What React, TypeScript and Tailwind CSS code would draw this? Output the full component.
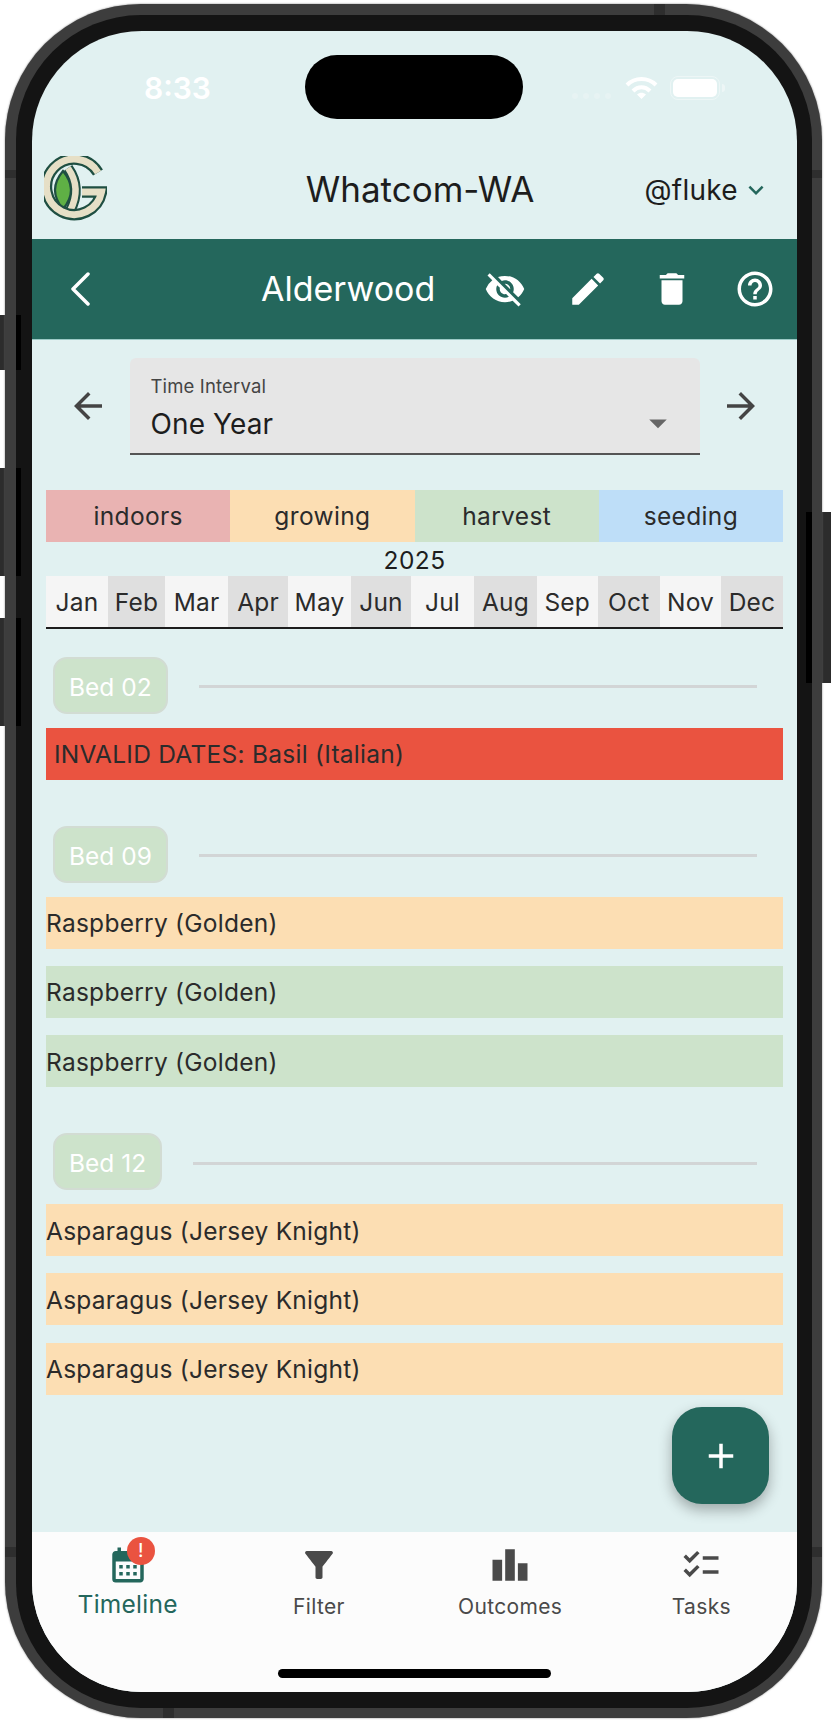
import {
  MdAdd,
  MdArrowBack,
  MdArrowDropDown,
  MdArrowForward,
  MdCalendarMonth,
  MdChecklist,
  MdDelete,
  MdEdit,
  MdFilterAlt,
  MdHelpOutline,
  MdKeyboardArrowDown,
  MdLeaderboard,
  MdVisibilityOff,
} from 'react-icons/md';

const months = ['Jan', 'Feb', 'Mar', 'Apr', 'May', 'Jun', 'Jul', 'Aug', 'Sep', 'Oct', 'Nov', 'Dec'];

const legend = [
  { label: 'indoors', bg: 'bg-[#e9b3b2]' },
  { label: 'growing', bg: 'bg-[#fcdeb3]' },
  { label: 'harvest', bg: 'bg-[#cde3cb]' },
  { label: 'seeding', bg: 'bg-[#bedef8]' },
];

const beds = [
  {
    name: 'Bed 02',
    rows: [{ label: 'INVALID DATES: Basil (Italian)', bg: 'bg-[#ea5340] pl-[8px]' }],
  },
  {
    name: 'Bed 09',
    rows: [
      { label: 'Raspberry (Golden)', bg: 'bg-[#fcdeb3]' },
      { label: 'Raspberry (Golden)', bg: 'bg-[#cde3cb]' },
      { label: 'Raspberry (Golden)', bg: 'bg-[#cde3cb]' },
    ],
  },
  {
    name: 'Bed 12',
    rows: [
      { label: 'Asparagus (Jersey Knight)', bg: 'bg-[#fcdeb3]' },
      { label: 'Asparagus (Jersey Knight)', bg: 'bg-[#fcdeb3]' },
      { label: 'Asparagus (Jersey Knight)', bg: 'bg-[#fcdeb3]' },
    ],
  },
];

function Logo() {
  return (
    <svg width="63" height="68" viewBox="14 15 63 68" fill="none">
      <path d="M33 30 Q17 49 33 68 Q49 49 33 30Z" fill="#5fb045" stroke="#1f4f42" strokeWidth="2.2" />
      <path d="M38 27 Q52 47 40 70" stroke="#1f4f42" strokeWidth="10.5" />
      <path d="M38 27 Q52 47 40 70" stroke="#e6dfc6" strokeWidth="6.5" />
      <path d="M68 31.5 A27.75 27.75 0 1 0 71.5 51 L52 51" stroke="#1f4f42" strokeWidth="11.5" strokeMiterlimit="10" />
      <path d="M68 31.5 A27.75 27.75 0 1 0 71.5 51 L52 51" stroke="#e6dfc6" strokeWidth="7" strokeMiterlimit="10" />
    </svg>
  );
}

function Wifi() {
  return (
    <svg width="33" height="24" viewBox="0 0 33 24" fill="none" stroke="white" strokeWidth="4">
      <path d="M2 9 C10 1 23 1 31 9" />
      <path d="M8 15 C13 10 20 10 25 15" />
      <path d="M16.5 23 L12 18.5 C15 16 18 16 21 18.5Z" fill="white" stroke="none" />
    </svg>
  );
}

function NavItem({ icon, label }: { icon: React.ReactNode; label: string }) {
  return (
    <div className="flex flex-col items-center pt-[12px] text-[#4a4a4a]">
      {icon}
      <span className="mt-[7px] text-[21px] leading-[28px] tracking-[0.35px]">{label}</span>
    </div>
  );
}

export default function App() {
  return (
    <div className="relative w-[839px] h-[1724px] bg-white pl-[5px] pt-[4px] font-[Inter,sans-serif]">
      {/* side buttons */}
      <div className="absolute left-0 top-[315px] w-[5px] h-[55px] bg-[#2c2c2c]" />
      <div className="absolute left-0 top-[468px] w-[5px] h-[108px] bg-[#2c2c2c]" />
      <div className="absolute left-0 top-[618px] w-[5px] h-[108px] bg-[#2c2c2c]" />
      <div className="absolute left-[822px] top-[512px] w-[9px] h-[171px] bg-[#2c2c2c]" />

      <div className="relative w-[817px] h-[1714px] rounded-[136px] bg-[#3d3d3d] pl-[11px] pr-[10px] pt-[11px] pb-[10px] shadow-[0_0_2px_#777]">
        {/* antenna bands */}
        <div className="absolute left-[649px] top-0 w-[11px] h-[11px] bg-[#2e2e2e]" />
        <div className="absolute left-[158px] bottom-0 w-[11px] h-[10px] bg-[#2e2e2e]" />
        <div className="absolute left-0 top-[166px] w-[11px] h-[8px] bg-[#2e2e2e]" />
        <div className="absolute right-0 top-[166px] w-[10px] h-[8px] bg-[#2e2e2e]" />
        <div className="absolute left-0 top-[1543px] w-[11px] h-[10px] bg-[#2e2e2e]" />
        <div className="absolute right-0 top-[1543px] w-[10px] h-[10px] bg-[#2e2e2e]" />

        <div className="relative w-full h-full rounded-[125px] bg-[#141414] p-[16px]">
          {/* darker strips behind the buttons */}
          <div className="absolute left-0 top-[300px] w-[5px] h-[55px] bg-black" />
          <div className="absolute left-0 top-[453px] w-[5px] h-[108px] bg-black" />
          <div className="absolute left-0 top-[603px] w-[5px] h-[108px] bg-black" />
          <div className="absolute right-0 top-[497px] w-[6px] h-[171px] bg-black" />

          <div className="relative flex flex-col w-[765px] h-[1661px] rounded-[110px] overflow-hidden bg-[#e1f1f1] text-[#1d1d1d]">
            {/* notch */}
            <div className="absolute left-[273px] top-[24px] w-[218px] h-[64px] rounded-full bg-black" />

            {/* status bar */}
            <div className="flex items-center justify-between h-[109px] pt-[5px] pl-[112px] pr-[72px] text-white">
              <span className="text-[30px] font-semibold leading-none">8:33</span>
              <div className="flex items-center">
                <div className="flex gap-[5px] mt-[16px] mr-[14px] opacity-20">
                  <span className="w-[6px] h-[6px] rounded-full bg-white" />
                  <span className="w-[6px] h-[6px] rounded-full bg-white" />
                  <span className="w-[6px] h-[6px] rounded-full bg-white" />
                  <span className="w-[6px] h-[6px] rounded-full bg-white" />
                </div>
                <Wifi />
                <div className="ml-[12px] w-[50px] h-[24px] rounded-[8px] border border-white/40 p-[2px]">
                  <div className="w-full h-full rounded-[5px] bg-white" />
                </div>
                <div className="ml-[2px] w-[3px] h-[8px] rounded-r bg-white/40" />
              </div>
            </div>

            {/* title row */}
            <div className="grid grid-cols-[1fr_auto_1fr] items-center h-[99px] pl-[12px] pr-[26px]">
              <Logo />
              <span className="ml-[25px] text-[35px] leading-none">Whatcom-WA</span>
              <div className="flex items-center justify-end gap-[3px]">
                <span className="text-[28px] leading-none tracking-[0.3px]">@fluke</span>
                <MdKeyboardArrowDown size={30} className="text-[#24675c]" />
              </div>
            </div>

            {/* action bar */}
            <div className="flex items-center h-[101px] bg-[#24675c] border-b border-[#9ccac6] text-white">
              <svg width="96" height="34" viewBox="0 0 96 34" fill="none" stroke="white" strokeWidth="3.5" strokeLinecap="round" strokeLinejoin="round">
                <path d="M56 2 L41 17 L56 32" />
              </svg>
              <span className="flex-1 pl-[133px] text-[34px] leading-none">Alderwood</span>
              <div className="flex w-[81px] justify-center"><MdVisibilityOff size={42} /></div>
              <div className="flex w-[86px] justify-center"><MdEdit size={42} /></div>
              <div className="flex w-[82px] justify-center"><MdDelete size={42} /></div>
              <div className="flex w-[84px] justify-center"><MdHelpOutline size={42} /></div>
            </div>

            <div className="relative flex-1 flex flex-col">
              {/* interval select */}
              <div className="flex items-center gap-[20.5px] px-[35px] pt-[18px]">
                <MdArrowBack size={42} className="mb-[1px] text-[#444]" />
                <div className="flex w-[570px] h-[97px] justify-between rounded-t-[6px] bg-[#e6e6e6] border-b-2 border-[#555] pl-[21px] pr-[21px]">
                  <div className="pt-[16px]">
                    <div className="text-[18.5px] leading-[24px] tracking-[0.15px] text-[#444]">Time Interval</div>
                    <div className="mt-[9px] text-[28px] leading-[34px] tracking-[0.1px]">One Year</div>
                  </div>
                  <MdArrowDropDown size={42} className="mt-[44px] text-[#666]" />
                </div>
                <MdArrowForward size={42} className="mb-[1px] text-[#444]" />
              </div>

              <div className="px-[14px]">
                {/* legend */}
                <div className="grid grid-cols-4 mt-[35px] h-[52px]">
                  {legend.map((l) => (
                    <div key={l.label} className={`flex items-center justify-center text-[24.5px] tracking-[0.35px] text-[#2b2b2b] ${l.bg}`}>
                      {l.label}
                    </div>
                  ))}
                </div>

                <div className="flex items-center justify-center h-[34px] pt-[2px] text-[24.5px] tracking-[0.44px]">2025</div>

                {/* months */}
                <div className="grid grid-cols-[62px_57px_63px_60px_63px_60px_63px_63px_60.5px_62.5px_61px_62px] h-[53px] border-b-2 border-[#1d1d1d]">
                  {months.map((m, i) => (
                    <div key={m} className={`flex items-center justify-center pt-[2px] text-[24.5px] tracking-[0.2px] text-[#2b2b2b] ${i % 2 === 0 ? 'bg-[#f5f5f5]' : 'bg-[#dfdfdf]'}`}>
                      {m}
                    </div>
                  ))}
                </div>

                {/* beds */}
                <div className="flex flex-col gap-[46px] mt-[27.5px]">
                  {beds.map((bed) => (
                    <div key={bed.name}>
                      <div className="flex items-center pl-[7px] pr-[26px] gap-[31px]">
                        <div className="flex items-center h-[57px] px-[14px] pt-[4px] rounded-[14px] border-2 border-[#d2dcd3] bg-[#cde3cb] text-[24.5px] text-white">
                          {bed.name}
                        </div>
                        <div className="flex-1 h-[3px] mt-[3px] bg-[#d2d5d6]" />
                      </div>
                      <div className="flex flex-col gap-[17.25px] mt-[14px]">
                        {bed.rows.map((row, i) => (
                          <div key={i} className={`flex items-center h-[52px] pt-[2px] text-[24.5px] tracking-[0.26px] text-[#2b2b2b] ${row.bg}`}>
                            {row.label}
                          </div>
                        ))}
                      </div>
                    </div>
                  ))}
                </div>
              </div>

              {/* add button */}
              <div className="absolute right-[28px] bottom-[28px] flex items-center justify-center w-[97px] h-[97px] rounded-[30px] bg-[#24675c] text-white shadow-[0_6px_14px_rgba(0,0,0,0.3)]">
                <MdAdd size={42} />
              </div>
            </div>

            {/* bottom nav */}
            <div className="relative grid grid-cols-4 h-[160px] bg-[#fcfcfc]">
              <div className="flex flex-col items-center pt-[12px] text-[#24675c]">
                <div className="relative">
                  <MdCalendarMonth size={42} />
                  <div className="absolute left-[20px] top-[-7px] flex items-center justify-center w-[28px] h-[28px] rounded-full bg-[#ea5340] text-[18px] font-medium leading-none text-white">
                    !
                  </div>
                </div>
                <span className="mt-[2px] text-[24.5px] leading-[32px] tracking-[0.25px]">Timeline</span>
              </div>
              <NavItem icon={<MdFilterAlt size={42} />} label="Filter" />
              <NavItem icon={<MdLeaderboard size={42} />} label="Outcomes" />
              <NavItem icon={<MdChecklist size={42} />} label="Tasks" />
              <div className="absolute left-[246px] bottom-[14px] w-[273px] h-[9px] rounded-full bg-black" />
            </div>
          </div>
        </div>
      </div>
    </div>
  );
}
